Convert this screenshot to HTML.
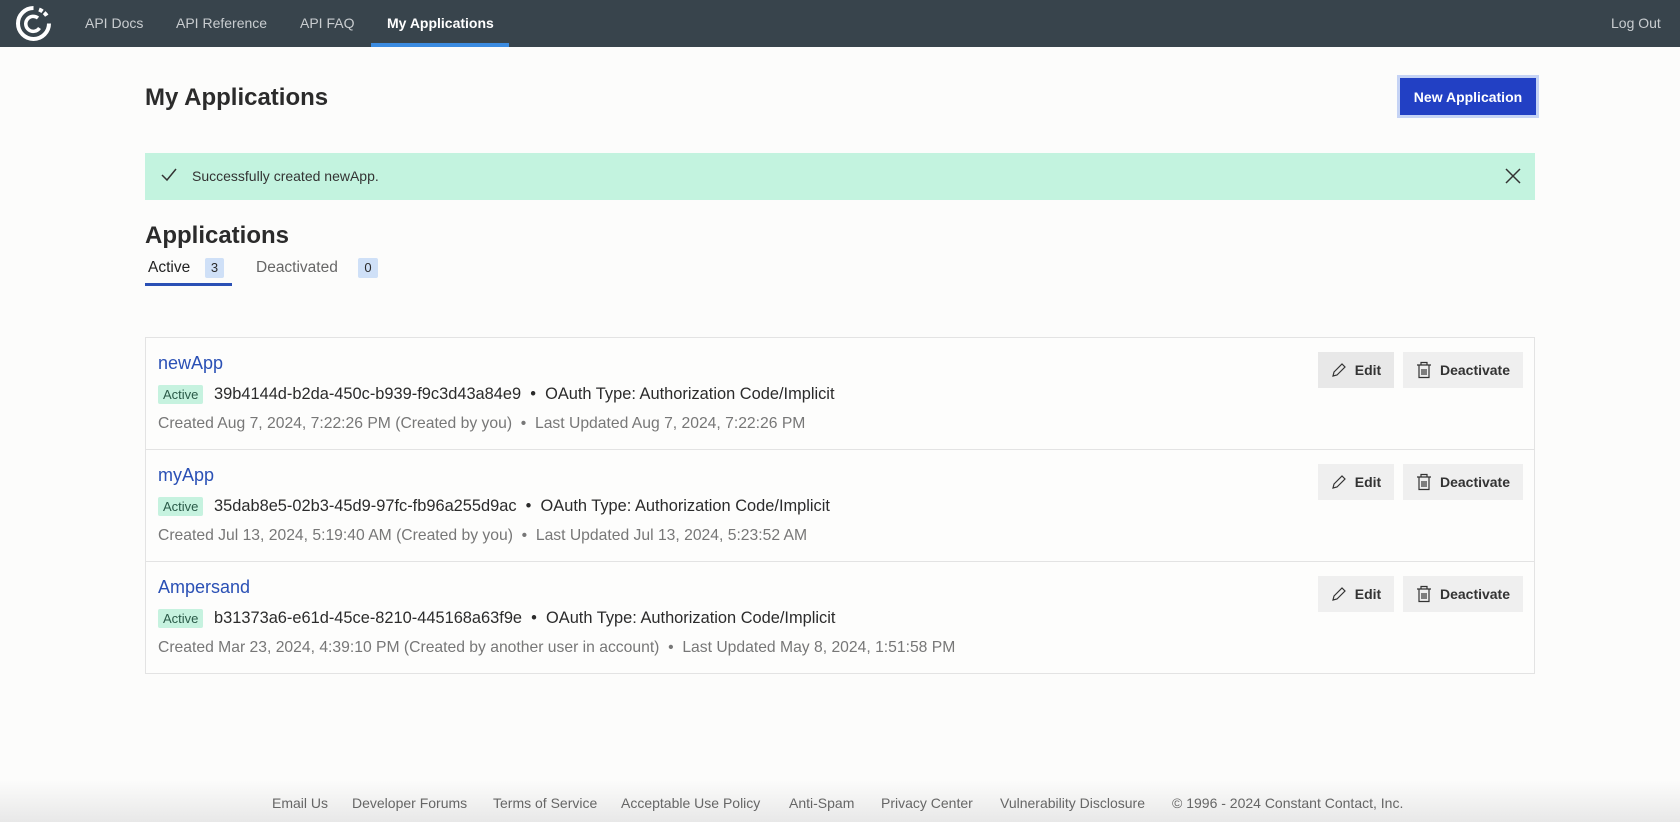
<!DOCTYPE html>
<html><head><meta charset="utf-8"><style>
*{margin:0;padding:0;box-sizing:border-box}
body{width:1680px;height:822px;background:#fcfcfb;font-family:"Liberation Sans",sans-serif;color:#2b2b2b;position:relative;overflow:hidden}
.a{position:absolute;white-space:nowrap}
.nav{position:absolute;left:0;top:0;width:1680px;height:47px;background:#38444c}
.nav .a{color:#c9cdd0;font-size:14px;top:15px}
.card{position:absolute;left:145px;width:1390px;height:113px;border:1px solid #e3e3e3;background:#fdfdfc}
.card .nm{left:12px;top:15px;color:#2a50b5;font-size:18px}
.card .bd{left:12px;top:47px;background:#c6f2df;color:#2a5a48;font-size:13px;padding:2px 5px;border-radius:2px}
.card .id{left:68px;top:47px;font-size:16.4px;color:#2b2b2b}
.card .cr{left:12px;top:77px;font-size:15.7px;color:#777}
.btn{position:absolute;top:14px;height:36px;background:#efefef;font-size:14px;font-weight:bold;color:#333;display:flex;align-items:center;justify-content:center;gap:8px}
.foot .a{top:795px;font-size:14px;color:#666}
</style></head><body>
<div class="nav">
<svg class="a" style="left:15px;top:5px" width="37" height="37" viewBox="0 0 37 37"><path d="M18.5 3 A15.5 15.5 0 1 0 34 18.5" fill="none" stroke="#fff" stroke-width="4"/><path d="M24 4.5 A15.5 15.5 0 0 1 32.5 12" fill="none" stroke="#fff" stroke-width="4" stroke-dasharray="4 2"/><path d="M23 13 A7.5 7.5 0 1 0 24.5 23" fill="none" stroke="#fff" stroke-width="3.5"/></svg>
<div class="a" style="left:85px">API Docs</div>
<div class="a" style="left:176px">API Reference</div>
<div class="a" style="left:300px">API FAQ</div>
<div class="a" style="left:387px;color:#fff;font-weight:bold">My Applications</div>
<div class="a" style="left:371px;top:43px;width:138px;height:4px;background:#3b8be0"></div>
<div class="a" style="left:1611px">Log Out</div>
</div>
<div class="a" style="left:145px;top:84px;font-size:24px;font-weight:bold;color:#2b2b2b">My Applications</div>
<div class="a" style="left:1400px;top:78px;width:136px;height:37px;background:#2240c4;color:#fff;font-size:14px;font-weight:bold;display:flex;align-items:center;justify-content:center;box-shadow:0 0 0 3px #c5d3f5">New Application</div>
<div class="a" style="left:145px;top:153px;width:1390px;height:47px;background:#c3f3df"></div>
<svg class="a" style="left:161px;top:168px" width="16" height="14"><path d="M1 7 L6 12 L15 1" fill="none" stroke="#333" stroke-width="1.5"/></svg>
<div class="a" style="left:192px;top:168px;font-size:14px;color:#333">Successfully created newApp.</div>
<svg class="a" style="left:1505px;top:168px" width="16" height="16"><path d="M1 1L15 15M15 1L1 15" stroke="#333" stroke-width="1.5"/></svg>
<div class="a" style="left:145px;top:222px;font-size:24px;font-weight:bold">Applications</div>
<div class="a" style="left:148px;top:259px;font-size:15.5px;color:#222">Active</div>
<div class="a" style="left:205px;top:258px;width:19px;height:20px;background:#cfe0f7;font-size:13px;text-align:center;line-height:20px;border-radius:2px">3</div>
<div class="a" style="left:145px;top:283px;width:87px;height:3px;background:#2a50b5"></div>
<div class="a" style="left:256px;top:259px;font-size:15.5px;color:#666">Deactivated</div>
<div class="a" style="left:358px;top:258px;width:20px;height:20px;background:#cfe0f7;font-size:13px;text-align:center;line-height:20px;border-radius:2px">0</div>

<div class="card" style="top:337px">
<div class="a nm">newApp</div><div class="a bd">Active</div>
<div class="a id">39b4144d-b2da-450c-b939-f9c3d43a84e9 &nbsp;•&nbsp; OAuth Type: Authorization Code/Implicit</div>
<div class="a cr">Created Aug 7, 2024, 7:22:26 PM (Created by you) &nbsp;•&nbsp; Last Updated Aug 7, 2024, 7:22:26 PM</div>
<div class="btn" style="left:1172px;width:76px;background:#e8e8e8"><svg width="16" height="16"><path d="M2 14 L3 10 L11 2 L14 5 L6 13 Z" fill="none" stroke="#333" stroke-width="1.2"/></svg>Edit</div>
<div class="btn" style="left:1257px;width:120px"><svg width="16" height="18"><path d="M1 4H15M5 4V1.5H11V4M3 4V16.5H13V4M6 8V14M8 8V14M10 8V14" fill="none" stroke="#333" stroke-width="1.2"/></svg>Deactivate</div>
</div>
<div class="card" style="top:449px">
<div class="a nm">myApp</div><div class="a bd">Active</div>
<div class="a id">35dab8e5-02b3-45d9-97fc-fb96a255d9ac &nbsp;•&nbsp; OAuth Type: Authorization Code/Implicit</div>
<div class="a cr">Created Jul 13, 2024, 5:19:40 AM (Created by you) &nbsp;•&nbsp; Last Updated Jul 13, 2024, 5:23:52 AM</div>
<div class="btn" style="left:1172px;width:76px"><svg width="16" height="16"><path d="M2 14 L3 10 L11 2 L14 5 L6 13 Z" fill="none" stroke="#333" stroke-width="1.2"/></svg>Edit</div>
<div class="btn" style="left:1257px;width:120px"><svg width="16" height="18"><path d="M1 4H15M5 4V1.5H11V4M3 4V16.5H13V4M6 8V14M8 8V14M10 8V14" fill="none" stroke="#333" stroke-width="1.2"/></svg>Deactivate</div>
</div>
<div class="card" style="top:561px">
<div class="a nm">Ampersand</div><div class="a bd">Active</div>
<div class="a id">b31373a6-e61d-45ce-8210-445168a63f9e &nbsp;•&nbsp; OAuth Type: Authorization Code/Implicit</div>
<div class="a cr">Created Mar 23, 2024, 4:39:10 PM (Created by another user in account) &nbsp;•&nbsp; Last Updated May 8, 2024, 1:51:58 PM</div>
<div class="btn" style="left:1172px;width:76px"><svg width="16" height="16"><path d="M2 14 L3 10 L11 2 L14 5 L6 13 Z" fill="none" stroke="#333" stroke-width="1.2"/></svg>Edit</div>
<div class="btn" style="left:1257px;width:120px"><svg width="16" height="18"><path d="M1 4H15M5 4V1.5H11V4M3 4V16.5H13V4M6 8V14M8 8V14M10 8V14" fill="none" stroke="#333" stroke-width="1.2"/></svg>Deactivate</div>
</div>

<div class="a" style="left:0;top:780px;width:1680px;height:42px;background:linear-gradient(#fcfcfb,#e8e8e8)"></div>
<div class="foot">
<div class="a" style="left:272px">Email Us</div>
<div class="a" style="left:352px">Developer Forums</div>
<div class="a" style="left:493px">Terms of Service</div>
<div class="a" style="left:621px">Acceptable Use Policy</div>
<div class="a" style="left:789px">Anti-Spam</div>
<div class="a" style="left:881px">Privacy Center</div>
<div class="a" style="left:1000px">Vulnerability Disclosure</div>
<div class="a" style="left:1172px">© 1996 - 2024 Constant Contact, Inc.</div>
</div>
</body></html>
